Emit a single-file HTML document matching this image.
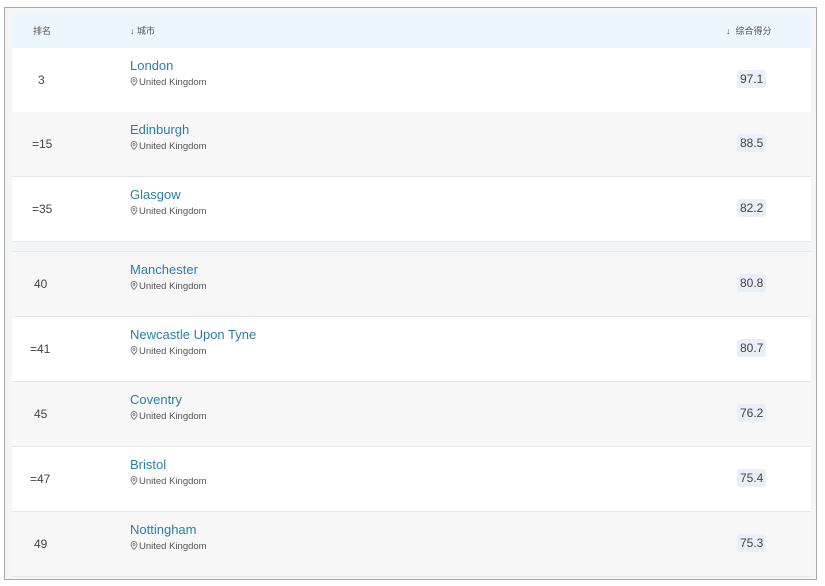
<!DOCTYPE html>
<html><head><meta charset="utf-8"><style>
*{margin:0;padding:0;box-sizing:border-box}
body{width:825px;height:586px;background:#fff;font-family:"Liberation Sans","Noto Sans CJK SC",sans-serif;position:relative;overflow:hidden}
.frame{position:absolute;left:4px;top:7px;width:813px;height:573px;border:1px solid #a8a8a8;background:#f4f5f7}
.hdr{position:absolute;left:12px;top:13px;width:799px;height:35px;background:#eef6fd;font-size:9px;color:#555}
.hdr span{position:absolute;top:11px}
.row{position:absolute;left:12px;width:799px;height:65px;border-bottom:1px solid #e6e8eb}
.w{background:#fff}.g{background:#f7f7f8}
.rk{position:absolute;left:20px;top:25px;font-size:12px;color:#444}
.nm{position:absolute;left:118px;top:10px;font-size:13px;color:#2a7fa8}
.loc{position:absolute;left:118px;top:29px;font-size:9.5px;color:#555}
.loc svg{vertical-align:-1px;margin-right:1px}
.sc{position:absolute;left:725px;top:22px;font-size:12px;color:#444;background:#e9eef9;padding:2px 3px;border-radius:3px}
</style></head><body>
<div class="frame"></div>
<div class="hdr"><span style="left:21px">排名</span><span style="left:118px">↓ 城市</span><span style="left:714px">↓ &nbsp;综合得分</span></div>

<div class="row w" style="top:48px"><div class="rk" style="left:26px">3</div><div class="nm">London</div><div class="loc"><svg width="8" height="9" viewBox="0 0 8 9"><path d="M4 8.5C1.5 6 1 4.5 1 3.5a3 3 0 0 1 6 0c0 1-.5 2.5-3 5z" fill="none" stroke="#666" stroke-width=".8"/><circle cx="4" cy="3.5" r="1" fill="none" stroke="#666" stroke-width=".7"/></svg>United Kingdom</div><div class="sc">97.1</div></div>
<div class="row g" style="top:112px"><div class="rk">=15</div><div class="nm">Edinburgh</div><div class="loc"><svg width="8" height="9" viewBox="0 0 8 9"><path d="M4 8.5C1.5 6 1 4.5 1 3.5a3 3 0 0 1 6 0c0 1-.5 2.5-3 5z" fill="none" stroke="#666" stroke-width=".8"/><circle cx="4" cy="3.5" r="1" fill="none" stroke="#666" stroke-width=".7"/></svg>United Kingdom</div><div class="sc">88.5</div></div>
<div class="row w" style="top:177px"><div class="rk">=35</div><div class="nm">Glasgow</div><div class="loc"><svg width="8" height="9" viewBox="0 0 8 9"><path d="M4 8.5C1.5 6 1 4.5 1 3.5a3 3 0 0 1 6 0c0 1-.5 2.5-3 5z" fill="none" stroke="#666" stroke-width=".8"/><circle cx="4" cy="3.5" r="1" fill="none" stroke="#666" stroke-width=".7"/></svg>United Kingdom</div><div class="sc">82.2</div></div>

<div class="row g" style="top:251px;border-top:1px solid #e6e8eb;height:66px"><div class="rk" style="left:22px">40</div><div class="nm">Manchester</div><div class="loc"><svg width="8" height="9" viewBox="0 0 8 9"><path d="M4 8.5C1.5 6 1 4.5 1 3.5a3 3 0 0 1 6 0c0 1-.5 2.5-3 5z" fill="none" stroke="#666" stroke-width=".8"/><circle cx="4" cy="3.5" r="1" fill="none" stroke="#666" stroke-width=".7"/></svg>United Kingdom</div><div class="sc">80.8</div></div>
<div class="row w" style="top:317px"><div class="rk" style="left:18px">=41</div><div class="nm">Newcastle Upon Tyne</div><div class="loc"><svg width="8" height="9" viewBox="0 0 8 9"><path d="M4 8.5C1.5 6 1 4.5 1 3.5a3 3 0 0 1 6 0c0 1-.5 2.5-3 5z" fill="none" stroke="#666" stroke-width=".8"/><circle cx="4" cy="3.5" r="1" fill="none" stroke="#666" stroke-width=".7"/></svg>United Kingdom</div><div class="sc">80.7</div></div>
<div class="row g" style="top:382px"><div class="rk" style="left:22px">45</div><div class="nm">Coventry</div><div class="loc"><svg width="8" height="9" viewBox="0 0 8 9"><path d="M4 8.5C1.5 6 1 4.5 1 3.5a3 3 0 0 1 6 0c0 1-.5 2.5-3 5z" fill="none" stroke="#666" stroke-width=".8"/><circle cx="4" cy="3.5" r="1" fill="none" stroke="#666" stroke-width=".7"/></svg>United Kingdom</div><div class="sc">76.2</div></div>
<div class="row w" style="top:447px"><div class="rk" style="left:18px">=47</div><div class="nm">Bristol</div><div class="loc"><svg width="8" height="9" viewBox="0 0 8 9"><path d="M4 8.5C1.5 6 1 4.5 1 3.5a3 3 0 0 1 6 0c0 1-.5 2.5-3 5z" fill="none" stroke="#666" stroke-width=".8"/><circle cx="4" cy="3.5" r="1" fill="none" stroke="#666" stroke-width=".7"/></svg>United Kingdom</div><div class="sc">75.4</div></div>
<div class="row g" style="top:512px"><div class="rk" style="left:22px">49</div><div class="nm">Nottingham</div><div class="loc"><svg width="8" height="9" viewBox="0 0 8 9"><path d="M4 8.5C1.5 6 1 4.5 1 3.5a3 3 0 0 1 6 0c0 1-.5 2.5-3 5z" fill="none" stroke="#666" stroke-width=".8"/><circle cx="4" cy="3.5" r="1" fill="none" stroke="#666" stroke-width=".7"/></svg>United Kingdom</div><div class="sc">75.3</div></div>
</body></html>
